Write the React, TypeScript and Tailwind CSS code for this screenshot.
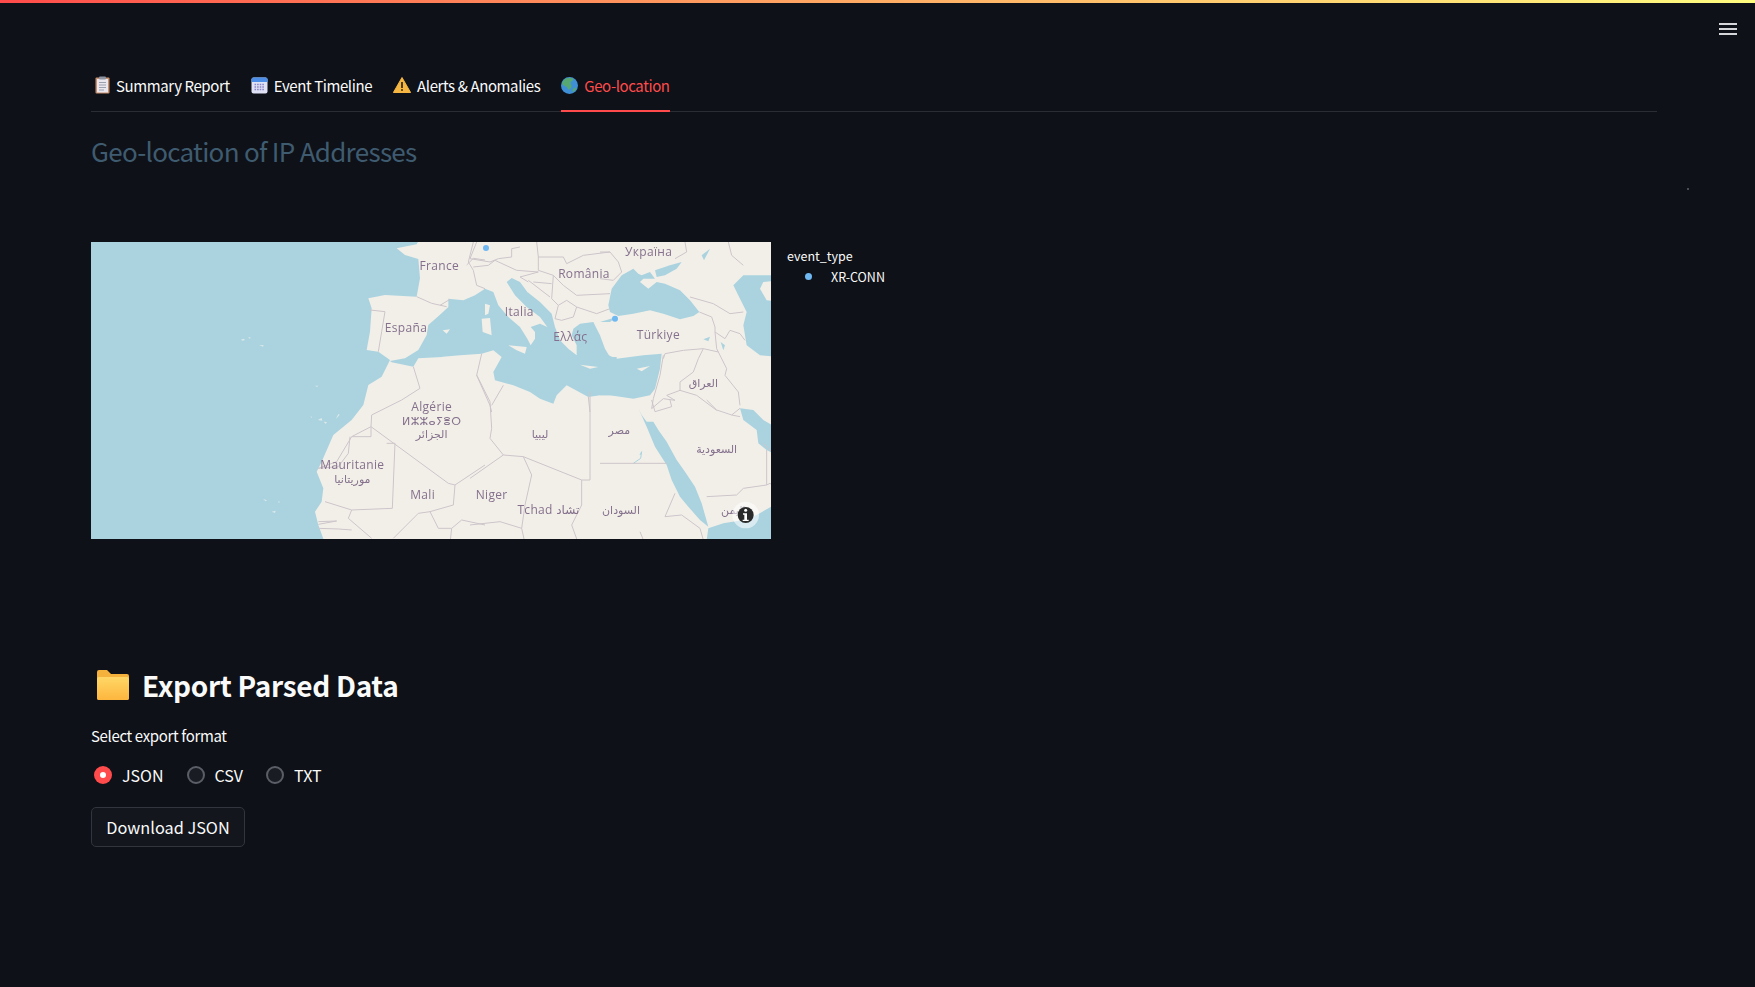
const SANS = "font-['Noto_Sans_CJK_SC','Noto_Sans',sans-serif]";

function ClipboardIcon() {
  return (
    <svg width="15" height="18" viewBox="0 0 15 18" className="shrink-0">
      <rect x="0.5" y="1.5" width="14" height="16" rx="1" fill="#c98f6c" />
      <rect x="2" y="3" width="11" height="13.5" fill="#e9e6ee" />
      <rect x="4" y="0.5" width="7" height="3" rx="1" fill="#8d95a3" />
      <path d="M4 6.5h7M4 9h7M4 11.5h7M4 14h5" stroke="#9aa0ad" strokeWidth="1" />
    </svg>
  );
}

function CalendarIcon() {
  return (
    <svg width="17" height="17" viewBox="0 0 17 17" className="shrink-0">
      <rect x="0.5" y="0.5" width="16" height="16" rx="2" fill="#dfe2f5" />
      <path d="M0.5 5V2.5a2 2 0 0 1 2-2h12a2 2 0 0 1 2 2V5z" fill="#4d8fe8" />
      <path d="M3.5 7.5h10M3.5 10h10M3.5 12.5h10" stroke="#8a84c9" strokeWidth="1.4" strokeDasharray="1.6 1" />
    </svg>
  );
}

function WarningIcon() {
  return (
    <svg width="18" height="16" viewBox="0 0 18 16" className="shrink-0">
      <path d="M9 0.5 17.6 15.5H0.4z" fill="#f5b642" stroke="#f5b642" strokeLinejoin="round" />
      <path d="M9 5v6" stroke="#3a2f1c" strokeWidth="1.8" />
      <circle cx="9" cy="13" r="1" fill="#3a2f1c" />
    </svg>
  );
}

function GlobeIcon() {
  return (
    <svg width="17" height="17" viewBox="0 0 17 17" className="shrink-0">
      <circle cx="8.5" cy="8.5" r="8.5" fill="#3f8fd6" />
      <path d="M3 3c2-2 6-3 9-1.500.8 1.600-.6 3-2.200 3.200C9 7.200 11 8 10.500 10c-.5 1.400-2 1.600-2.500 3-1.500-1-1.600-3-3-3.500C3.500 9 1.500 8 1 6.500 1.500 5 2 4 3 3z" fill="#57a773" />
      <path d="M12 12c1-1 2.500-1.500 3.500-1.200-.5 1.800-1.800 3.400-3.500 4.200-.7-1-.8-2.200 0-3z" fill="#57a773" />
    </svg>
  );
}

function FolderIcon() {
  return (
    <svg width="32" height="30" viewBox="0 0 32 30" className="shrink-0">
      <defs>
        <linearGradient id="folder" x1="0" y1="0" x2="0" y2="1">
          <stop offset="0" stopColor="#ffd766" />
          <stop offset="1" stopColor="#fdb63e" />
        </linearGradient>
      </defs>
      <path d="M0 2a2 2 0 0 1 2-2h8l4 4h16a2 2 0 0 1 2 2v22a2 2 0 0 1-2 2H2a2 2 0 0 1-2-2z" fill="#f4b13b" />
      <path d="M0 9a2 2 0 0 1 2-2h28a2 2 0 0 1 2 2v19a2 2 0 0 1-2 2H2a2 2 0 0 1-2-2z" fill="url(#folder)" />
    </svg>
  );
}

const WATER = "#aad3df";
const LAND = "#f2efe9";

function MapView() {
  const border = { fill: "none", stroke: "#cdc5ca", strokeWidth: 3, strokeLinejoin: "round" as const };
  const label = { fill: "#84708c", fontFamily: "'Open Sans','DejaVu Sans',sans-serif", fontSize: 36, letterSpacing: 1, textAnchor: "middle" as const };
  const arabic = { ...label, fontFamily: "'DejaVu Sans',sans-serif", fontSize: 33, letterSpacing: 0 };
  return (
    <div className="relative h-[297px] w-[680px] shrink-0 overflow-hidden">
      <svg width="680" height="297" viewBox="0 0 680 297" className="block blur-[0.5px]">
        <rect width="680" height="297" fill={LAND} />

        {/* Atlantic side, traced at 3x from the tile */}
        <g transform="translate(-6 -7) scale(0.33333)">
          <path
            d="M0 0H1010L995 28L935 40L960 60L1000 72L1005 130L995 185L900 180L850 190L860 220L855 290L845 345L880 350L915 375L890 425L850 450L835 510L800 555L745 600L710 680L695 710L715 760L710 800L690 830L700 870L720 925H0z"
            fill={WATER}
          />
          <path d="M915 378L960 370L1000 345L1025 300L1030 270L1065 239L1072 239L1072 366L1000 370L985 395L920 382z" fill={WATER} />
          <path d="M468 314l8-3 4 4-8 2zM490 306l8 2-5 3zM522 330l14 1-2 4zM690 452l10 0-4 4zM698 555l12-6 2 8zM716 560l10 1-4 6zM752 553l8-16 4 2zM676 544l6 2-3 2zM534 792l12 4-4 3zM560 830l12-3-2 7zM580 798l5 3-4 3z" fill="#dce9e9" />
          <path d="M995 185L1040 205L1085 215M1145 90L1165 70L1200 75M855 225L900 230L890 290L880 350" {...border} />
          <path d="M985 395L1005 460L950 495L860 540L858 575L800 605L858 605L858 575L1090 745L1110 750L1200 690M800 605L755 680L700 700L760 695L790 655L795 605" {...border} />
          <path d="M905 625L930 625L922 820L800 825L720 800M1110 750L1105 810L1035 830L1000 835L925 910M800 825L790 850L860 910M1035 830L1060 880L1100 880L1095 925M1100 880L1130 855L1200 870M700 860L755 858L700 868M700 880L760 882L800 885" {...border} />
        </g>

        {/* Mediterranean, Italy and the Balkans */}
        <g transform="translate(349 0) scale(0.33333)">
          <path
            d="M0 218L25 195L25 170L70 175L105 160L135 140L160 150L175 190L205 225L240 255L262 290L272 310L285 290L285 270L272 255L300 245L322 255L300 225L260 195L225 160L200 120L215 108L240 120L262 150L300 180L335 215L345 255L360 295L385 320L410 340L410 310L395 280L400 260L420 245L460 240L470 260L480 280L495 320L510 345L530 345L530 460L480 460L445 465L380 430L350 460L340 485L300 470L270 450L220 430L165 415L160 390L185 345L160 325L125 335L60 340L0 345z"
            fill={WATER}
          />
          <path d="M205 310L260 315L255 335L230 325zM125 230L150 228L155 280L128 270zM135 185L150 190L145 215L135 220zM420 368L475 375L450 380zM8 265L30 262L20 275z" fill={LAND} />
          <path d="M100 85L85 60L100 0M100 85L110 130L135 140M100 75L145 70L165 55L230 85L295 90L240 105L265 120M110 0L90 50L150 60L175 50L215 45L215 20L240 15M290 0L295 45L295 85L340 100L335 170L355 190L345 230L365 235L400 225L410 195L380 175L355 190M295 45L370 45L380 65L430 40L510 30M340 100L370 130L410 160L510 155M265 115L330 165M410 195L470 215L510 200M280 120L335 125M0 190L30 172" {...border} />
          <path d="M125 335L110 400L150 490L155 510M190 430L155 490M445 465L450 510" {...border} />
          <circle cx="138" cy="18" r="9" fill="#6fb8f2" />
          <text x="238" y="221" {...label}>Italia</text>
          <text x="432" y="108" {...label}>România</text>
          <text x="391" y="297" {...label}>Ελλάς</text>
        </g>

        {/* Black Sea, Türkiye, Caspian */}
        <g transform="translate(509 0) scale(0.33333)">
          <path
            d="M0 310L15 335L50 350L90 345L130 340L185 335L180 380L165 440L150 460L100 470L30 460L0 460z"
            fill={WATER}
          />
          <path d="M25 190L35 140L65 100L100 80L115 95L125 100L150 90L165 110L130 110L120 120L145 140L170 120L195 125L240 145L270 175L298 210L280 222L240 232L190 215L150 205L100 215L55 222L30 210z" fill={WATER} />
          <path d="M165 85L210 70L245 60L230 80L195 100L170 105z" fill={WATER} />
          <path d="M0 240L50 225L30 240z" fill={WATER} />
          <path d="M540 100L430 100L400 130L420 170L440 210L430 250L440 310L480 340L540 345z" fill={WATER} />
          <path d="M540 115L490 120L480 140L500 175L540 180z" fill={LAND} />
          <path d="M110 380L150 372L125 388z" fill={LAND} />
          <path d="M310 292L330 284L325 298zM362 300L370 325L375 310zM305 40L330 20L312 55z" fill={WATER} />
          <path d="M0 30L30 30L55 60L65 90L40 115L0 110M255 0L260 30L225 50M385 0L395 40L430 70M270 165L340 185L390 215L430 210M298 210L335 225L345 255L345 270L375 290L390 265L420 275L435 295M345 270L350 320L355 330L380 380L375 400L415 450L420 490M190 350L195 335L250 325L310 320L355 330M190 340L180 400L160 470L155 500M310 320L295 350L280 390L240 420L240 445L200 460L225 475L190 470L155 500M240 445L290 460L350 505" {...border} />
          <circle cx="45" cy="230" r="9" fill="#6fb8f2" />
          <text x="146" y="42" {...label}>Україна</text>
          <text x="175" y="292" {...label}>Türkiye</text>
          <text x="310" y="434" {...arabic}>العراق</text>
        </g>

        {/* Red Sea, Persian Gulf, Gulf of Aden */}
        <g transform="translate(509 158) scale(0.33333)">
          <path d="M115 25L125 45L140 65L160 65L175 90L200 125L230 180L255 215L285 260L305 310L325 380L300 360L265 320L240 290L215 240L200 195L165 140L140 80z" fill={WATER} />
          <path d="M420 25L460 30L490 60L540 90V170L500 150L475 130L470 90L430 60z" fill={WATER} />
          <path d="M325 385L370 370L430 360L470 345L540 305V420H320z" fill={WATER} />
          <path d="M120 165L125 155L122 175L100 190" fill="none" stroke={WATER} strokeWidth="3" />
          <path d="M0 190H200M225 280L195 350L245 345L300 385L310 420M120 395L130 420M155 0L165 35L215 20L210 0M320 0L350 30L395 45L420 50M395 45L420 25M320 290L410 285L430 265L500 255L510 250L530 265M500 255L500 150M490 130L530 170" {...border} />
          <text x="350" y="160" {...arabic}>السعودية</text>
          <text x="63" y="342" {...arabic}>السودان</text>
          <text x="58" y="101" {...arabic}>مصر</text>
          <text x="400" y="342" {...arabic}>اليمن</text>
          <circle cx="437" cy="345" r="40" fill="#ffffff" fillOpacity="0.55" />
          <circle cx="437" cy="345" r="24" fill="#2a2a2a" />
          <circle cx="437" cy="331" r="4.500" fill="#fff" />
          <path d="M429 340H441V359H446V363H428V359H433V344H429z" fill="#fff" />
        </g>

        {/* labels on the African side */}
        <g transform="translate(379 -7) scale(0.33333)">
          <path d="M20 420L60 500L65 580L60 610L100 660L0 730M100 660L160 665L335 735L360 735V470M335 735V810L305 870L325 925M160 665L185 720L165 810L155 880L165 925M0 870L90 860L155 880" {...border} />
          <text x="65" y="793" {...label}>Niger</text>
          <text x="235" y="836" {...label}>Tchad تشاد</text>
          <text x="210" y="608" {...arabic}>ليبيا</text>
        </g>
        <g transform="translate(-6 -7) scale(0.33333)">
          <text x="1063" y="105" {...label}>France</text>
          <text x="963" y="292" {...label}>España</text>
          <text x="1040" y="528" {...label}>Algérie</text>
          <text x="1040" y="569" {...label} fontFamily="'DejaVu Sans',sans-serif" fontSize="33">ⵍⵣⵣⴰⵢⴻⵔ</text>
          <text x="1040" y="610" {...arabic}>الجزائر</text>
          <text x="802" y="701" {...label}>Mauritanie</text>
          <text x="802" y="743" {...arabic}>موريتانيا</text>
          <text x="1013" y="791" {...label}>Mali</text>
        </g>
      </svg>
    </div>
  );
}

function Tab({ icon, label, active }: { icon: React.ReactNode; label: string; active?: boolean }) {
  return (
    <div
      className={
        "-mb-px flex h-[48px] items-center gap-[6px] border-b-2 pb-[4px] " +
        (active ? "border-[#ff4b4b] text-[#ff4b4b]" : "border-transparent text-[#fafafa]")
      }
    >
      {icon}
      <span className="text-[15px] leading-none tracking-[-0.4px]">{label}</span>
    </div>
  );
}

function Radio({ label, checked }: { label: string; checked?: boolean }) {
  return (
    <div className="flex items-center gap-[10px]">
      {checked ? (
        <span className="flex h-[18px] w-[18px] items-center justify-center rounded-full bg-[#ff4b4b]">
          <span className="h-[6px] w-[6px] rounded-full bg-white" />
        </span>
      ) : (
        <span className="h-[18px] w-[18px] rounded-full border-2 border-[#5b5e66] bg-[#1a1c24]" />
      )}
      <span className="text-[16px] leading-none text-[#fafafa]">{label}</span>
    </div>
  );
}

export default function App() {
  return (
    <div className={"relative h-[987px] w-full overflow-hidden bg-[#0e1117] " + SANS}>
      <div className="h-[3px] w-full bg-gradient-to-r from-[#ff4b4b] to-[#fffd80]" />

      <div className="absolute right-[18px] top-[23px] flex w-[18px] flex-col gap-[3px]">
        <span className="h-[2px] bg-[#d5d6d9]" />
        <span className="h-[2px] bg-[#d5d6d9]" />
        <span className="h-[2px] bg-[#d5d6d9]" />
      </div>
      <span className="absolute left-[1687px] top-[188px] h-[2px] w-[2px] bg-[#4a4d55]" />

      <div className="pl-[91px] pr-[98px] pt-[61px]">
        <div className="flex gap-[21px] border-b border-[#2b2d35] pl-[4px]">
          <Tab icon={<ClipboardIcon />} label="Summary Report" />
          <Tab icon={<CalendarIcon />} label="Event Timeline" />
          <Tab icon={<WarningIcon />} label="Alerts & Anomalies" />
          <Tab icon={<GlobeIcon />} label="Geo-location" active />
        </div>

        <h3 className="mt-[19px] text-[26px] leading-[40px] tracking-[-0.7px] text-[#3f5b70]">
          Geo-location of IP Addresses
        </h3>

        <div className="mt-[71px] flex">
          <MapView />
          <div className="ml-[16px] pt-[8px] text-[12.5px] leading-none text-[#fafafa]">
            <div>event_type</div>
            <div className="mt-[8px] flex items-center pl-[18px]">
              <span className="h-[7px] w-[7px] rounded-full bg-[#6fb8f2]" />
              <span className="ml-[19px]">XR-CONN</span>
            </div>
          </div>
        </div>

        <div className="mt-[129px] flex items-center gap-[13px] pl-[6px]">
          <FolderIcon />
          <h2 className="text-[28px] font-bold leading-[34px] tracking-[-0.3px] text-[#fafafa]">Export Parsed Data</h2>
        </div>

        <div className="mt-[23px] text-[15px] leading-[22px] tracking-[-0.35px] text-[#fafafa]">Select export format</div>

        <div className="mt-[19px] flex gap-[23px] pl-[3px]">
          <Radio label="JSON" checked />
          <Radio label="CSV" />
          <Radio label="TXT" />
        </div>

        <button className="mt-[23px] flex h-[40px] w-[154px] items-center justify-center rounded-[5px] border border-[#32353d] bg-[#13161d] text-[16.3px] text-[#fafafa]">
          Download JSON
        </button>
      </div>
    </div>
  );
}
